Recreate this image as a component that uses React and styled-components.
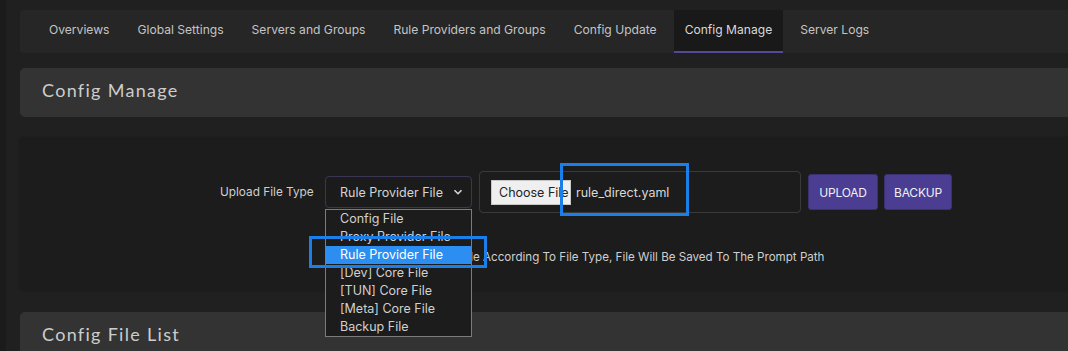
import React from "react";
import styled, { createGlobalStyle } from "styled-components";

const Global = createGlobalStyle`
  html, body { margin: 0; padding: 0; background: #202020; overflow: hidden; }
  body { font-family: Inter, "Noto Sans", sans-serif; color: #cfcfcf; }
  * { box-sizing: border-box; }
`;

const Page = styled.div`
  position: relative;
  width: 1068px;
  height: 351px;
  overflow: hidden;
  background: #202020;
  border-left: 6px solid #1b1b1b;
`;

const Main = styled.div`
  width: 1140px;
  padding: 10px 0 0 14px;
  display: flex;
  flex-direction: column;
`;

const Nav = styled.nav`
  height: 43px;
  background: #262626;
  border-radius: 4px;
  display: flex;
  align-items: stretch;
  padding-left: 15px;
`;

const Tab = styled.div`
  display: flex;
  align-items: center;
  padding: 0 11px 3px;
  margin: 0 3px;
  font-size: 12.1px;
  color: ${(p) => (p.$active ? "#d8d8d8" : "#c4c4c4")};
  background: ${(p) => (p.$active ? "#191919" : "transparent")};
  border-bottom: 2px solid ${(p) => (p.$active ? "#54489a" : "transparent")};
  white-space: nowrap;
`;

const SectionHead = styled.div`
  margin-top: ${(p) => p.$mt}px;
  height: 49px;
  background: #333333;
  border-radius: 5px;
  display: flex;
  align-items: center;
  padding: 0 0 5px 22px;
  font-family: Lato, "Noto Sans", sans-serif;
  font-size: 18px;
  letter-spacing: 1.3px;
  color: #cdcdcd;
`;

const Card = styled.div`
  margin-top: 21px;
  height: 152px;
  background: #1c1c1c;
  border-radius: 4px;
  box-shadow: 0 0 3px rgba(0, 0, 0, 0.35);
  padding: 33px 0 0 200px;
  display: flex;
  flex-direction: column;
`;

const FormRow = styled.div`
  display: flex;
  align-items: center;
  width: 732px;
  height: 42px;
`;

const Label = styled.span`
  font-size: 11.8px;
  color: #cfcfcf;
  width: 105px;
  white-space: nowrap;
`;

const SelectWrap = styled.div`
  position: relative;
  width: 147px;
  height: 32px;
`;

const SelectBox = styled.div`
  height: 32px;
  border: 1px solid #3b3654;
  border-radius: 4px;
  background: #1b1b1b;
  display: flex;
  align-items: center;
  justify-content: space-between;
  padding: 0 8px 0 14px;
  font-size: 12.5px;
  color: #d4d4d4;
`;

const Options = styled.ul`
  position: absolute;
  top: 33px;
  left: 0;
  width: 147px;
  margin: 0;
  padding: 0;
  list-style: none;
  background: #1c1c1c;
  border: 1px solid #7c7c7c;
  z-index: 5;
`;

const Option = styled.li`
  height: 18px;
  line-height: 18px;
  padding-left: 14px;
  font-size: 12.5px;
  white-space: nowrap;
  color: ${(p) => (p.$selected ? "#ffffff" : "#d0d0d0")};
  background: ${(p) => (p.$selected ? "#2b8ef0" : "transparent")};
`;

const FileBox = styled.div`
  margin-left: 7px;
  width: 322px;
  height: 42px;
  border: 1px solid #3a3a3a;
  border-radius: 4px;
  display: flex;
  align-items: center;
  padding-left: 11px;
  gap: 5px;
`;

const ChooseBtn = styled.div`
  height: 25px;
  width: 80px;
  background: #efefef;
  border: 1px solid #c8c8c8;
  color: #222;
  font-size: 12.5px;
  display: flex;
  align-items: center;
  padding-left: 7px;
  white-space: nowrap;
  overflow: hidden;
`;

const FileName = styled.span`
  font-size: 12.5px;
  color: #d8d8d8;
`;

const Btn = styled.div`
  margin-left: ${(p) => p.$ml}px;
  width: ${(p) => p.$w}px;
  height: 36px;
  background: #4a3d92;
  border: 1px solid #3a3170;
  border-radius: 3px;
  color: #f0f0f0;
  font-size: 12px;
  display: flex;
  align-items: center;
  justify-content: center;
  letter-spacing: -0.2px;
`;

const Help = styled.div`
  margin-top: 37px;
  padding-left: 134px;
  font-size: 11.6px;
  color: #cfcfcf;
  white-space: nowrap;
`;

const Mark = styled.div`
  position: absolute;
  left: ${(p) => p.$x}px;
  top: ${(p) => p.$y}px;
  width: ${(p) => p.$w}px;
  height: ${(p) => p.$h}px;
  border: 3px solid #1a7fe8;
  z-index: 10;
`;

const Chevron = () => (
  <svg width="10" height="10" viewBox="0 0 10 10">
    <path d="M1.5 3.2 L5 6.7 L8.5 3.2" fill="none" stroke="#d8d8d8" strokeWidth="1.6" />
  </svg>
);

const tabs = [
  "Overviews",
  "Global Settings",
  "Servers and Groups",
  "Rule Providers and Groups",
  "Config Update",
  "Config Manage",
  "Server Logs",
];

const options = [
  "Config File",
  "Proxy Provider File",
  "Rule Provider File",
  "[Dev] Core File",
  "[TUN] Core File",
  "[Meta] Core File",
  "Backup File",
];

export default function App() {
  return (
    <>
      <Global />
      <Page>
        <Main>
          <Nav>
            {tabs.map((t) => (
              <Tab key={t} $active={t === "Config Manage"}>
                {t}
              </Tab>
            ))}
          </Nav>
          <SectionHead $mt={15}>Config Manage</SectionHead>
          <Card>
            <FormRow>
              <Label>Upload File Type</Label>
              <SelectWrap>
                <SelectBox>
                  <span>Rule Provider File</span>
                  <Chevron />
                </SelectBox>
                <Options>
                  {options.map((o) => (
                    <Option key={o} $selected={o === "Rule Provider File"}>
                      {o}
                    </Option>
                  ))}
                </Options>
              </SelectWrap>
              <FileBox>
                <ChooseBtn>Choose File</ChooseBtn>
                <FileName>rule_direct.yaml</FileName>
              </FileBox>
              <Btn $ml={7} $w={70}>UPLOAD</Btn>
              <Btn $ml={6} $w={68}>BACKUP</Btn>
            </FormRow>
            <Help>
              Please Upload The File According To File Type, File Will Be Saved To The Prompt Path
            </Help>
          </Card>
          <SectionHead $mt={22}>Config File List</SectionHead>
        </Main>
        <Mark $x={554} $y={163} $w={129} $h={53} />
        <Mark $x={303} $y={236} $w={178} $h={32} />
      </Page>
    </>
  );
}
